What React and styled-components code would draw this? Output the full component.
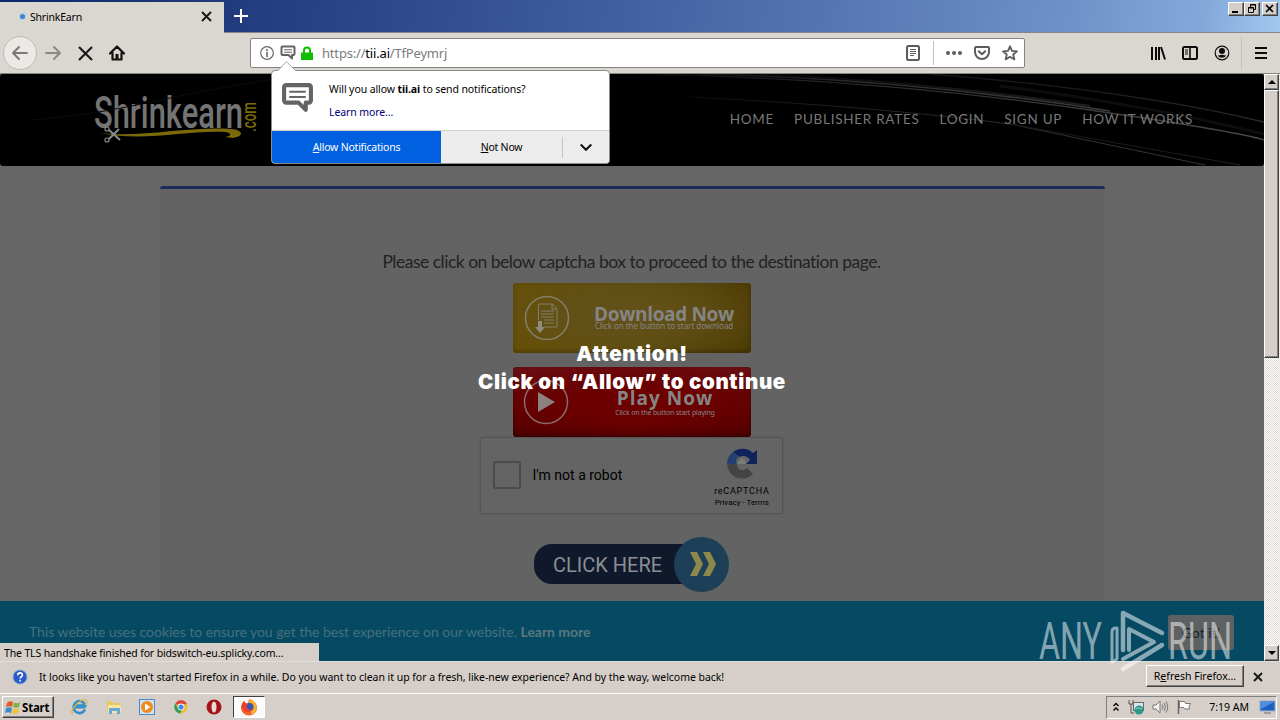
import React from 'react'
import styled, { createGlobalStyle, css } from 'styled-components'

const COLORS = {
  chrome: '#dad6d0',
  classic: '#d6cfc9',
  page: '#666',
  card: '#636363',
  cookie: '#054a62',
  blue: '#0060df'
}

const GlobalStyle = createGlobalStyle`
  * {
    box-sizing: border-box;
  }
  body {
    margin: 0;
    overflow: hidden;
  }
  button {
    border: 0;
    padding: 0;
    font: inherit;
    color: inherit;
    letter-spacing: inherit;
  }
  svg {
    display: block;
    flex: none;
    overflow: visible;
  }
`

const raised = css`
  border: 1px solid;
  border-color: #fff #404040 #404040 #fff;
  box-shadow: inset -1px -1px #808080;
  background: ${COLORS.classic};
`

const Screen = styled.div`
  position: relative;
  display: flex;
  flex-direction: column;
  width: 1280px;
  height: 720px;
  overflow: hidden;
  background: ${COLORS.classic};
  color: #000;
  font-family: 'Noto Sans', 'Liberation Sans', sans-serif;
  font-size: 10.5px;
  white-space: nowrap;
`

/* Title bar */

const TitleBar = styled.header`
  display: flex;
  height: 33px;
  border-bottom: 1px solid #84868c;
  background: linear-gradient(97deg, #0c276c 0%, #213b7d 18%, #3a5799 42%, #5474b0 64%, #6f93c8 84%, #83a9da 94%, #a2c8f0 100%);
`
const Tab = styled.div`
  display: flex;
  align-items: center;
  width: 224px;
  height: 31px;
  margin-top: 2px;
  padding: 0 12px 2px 20px;
  background: ${COLORS.chrome};
`
const LoadingDot = styled.i`
  width: 5px;
  height: 5px;
  border-radius: 50%;
  background: #3f83c8;
  box-shadow: 0 0 0 1px #b4cfe8;
`
const TabTitle = styled.span`
  flex: 1;
  margin-left: 5px;
  letter-spacing: -0.2px;
`
const NewTab = styled.button`
  display: flex;
  align-items: center;
  margin-left: 10px;
  background: none;
`
const WindowButtons = styled.div`
  display: flex;
  margin: 2px 2px 0 auto;
`
const WindowButton = styled.button`
  ${raised}
  width: 16px;
  height: 14px;
  margin-left: ${p => p.$gap || 0}px;
`

/* Navigation toolbar */

const Toolbar = styled.nav`
  display: flex;
  align-items: center;
  height: 41px;
  padding: 0 11px 0 3px;
  border-bottom: 1px solid #87857f;
  background: ${COLORS.chrome};
`
const BackButton = styled.button`
  display: grid;
  place-items: center;
  width: 34px;
  height: 34px;
  border: 1px solid #bebab5;
  border-radius: 50%;
  background: #ebe8e5;
`
const ToolIcons = styled.div`
  display: flex;
  align-items: center;
  gap: ${p => p.$gap}px;
  margin-left: ${p => p.$left || 0}px;
`
const UrlBar = styled.div`
  display: flex;
  align-items: center;
  width: 775px;
  height: 30px;
  margin-left: 125px;
  padding: 0 6px 0 8px;
  border: 1px solid #85837f;
  border-radius: 2px;
  background: #fff;
`
const Url = styled.span`
  flex: 1;
  margin-left: 8px;
  color: #7c7c7c;
  font-size: 13px;
  letter-spacing: -0.18px;

  b {
    color: #000;
    font-weight: 400;
  }
`
const Divider = styled.i`
  width: 1px;
  height: ${p => p.$height || 24}px;
  background: #c2bfbc;
`

/* Web page */

const Viewport = styled.div`
  display: flex;
  height: 587px;
`
const Page = styled.div`
  position: relative;
  display: flex;
  flex-direction: column;
  width: 1264px;
  background: ${COLORS.page};
  font-family: Lato, sans-serif;
`
const SiteHeader = styled.header`
  position: relative;
  display: flex;
  justify-content: space-between;
  align-items: center;
  flex: none;
  height: 92px;
  padding: 0 71px 0 92px;
  border-radius: 3px;
  overflow: hidden;
  background: #000;
`
const Streaks = styled.svg`
  position: absolute;
  inset: 0;
`
const SiteNav = styled.div`
  position: relative;
  display: flex;
  gap: 20px;
  margin-bottom: 2px;
  color: #787878;
  font-size: 13.5px;
  letter-spacing: 0.72px;
`
const Main = styled.main`
  flex: 1;
  min-height: 0;
  padding: 20px 159px 0 160px;
  overflow: hidden;
`
const Card = styled.section`
  display: flex;
  flex-direction: column;
  align-items: center;
  height: 600px;
  padding-right: 2px;
  border-top: 3px solid #1b2b59;
  border-radius: 3px 3px 0 0;
  background: ${COLORS.card};
`
const Hint = styled.p`
  margin: 62px 0 0;
  color: #222;
  font-size: 17.5px;
  line-height: 22px;
  letter-spacing: -0.5px;
`
const Banner = styled.button`
  display: flex;
  align-items: center;
  width: 238px;
  height: 70px;
  margin-top: ${p => p.$top}px;
  padding-left: ${p => (p.$red ? 10 : 11)}px;
  border-radius: 3px;
  background: ${p =>
    p.$red
      ? 'radial-gradient(ellipse at 50% 50%, #6c0000 30%, transparent 100%), linear-gradient(#6a1117, #5c0000 60%, #4b0000)'
      : 'radial-gradient(ellipse at 45% 45%, #625018 20%, transparent 100%), linear-gradient(90deg, #685000, #5d4d10 50%, #4a3900)'};
  box-shadow: inset 0 -2px 4px rgba(0, 0, 0, 0.25);
  color: #858585;
`
const BannerText = styled.span`
  display: flex;
  flex: 1;
  flex-direction: column;
  align-items: center;
  margin: ${p => (p.$red ? '2px 0 0 11px' : '0 0 1px 8px')};
  font-family: 'Noto Sans', sans-serif;

  b {
    font-family: 'Open Sans', 'Noto Sans', sans-serif;
    font-size: 19px;
    line-height: 18px;
    letter-spacing: ${p => (p.$red ? 1 : -0.35)}px;
  }
  small {
    font-size: ${p => (p.$red ? 7 : 8)}px;
    line-height: 8px;
    letter-spacing: ${p => (p.$red ? -0.17 : -0.03)}px;
    margin-top: ${p => (p.$red ? 2 : -1)}px;
  }
`
const Captcha = styled.div`
  display: flex;
  align-items: center;
  width: 303px;
  height: 77px;
  margin-right: 1px;
  padding: 0 12px 2px 12px;
  border: 1px solid #545454;
  border-radius: 3px;
  background: #646464;
  box-shadow: 0 0 3px rgba(0, 0, 0, 0.14);
`
const Checkbox = styled.i`
  width: 28px;
  height: 28px;
  border: 2px solid #4b4b4b;
  border-radius: 2px;
`
const CaptchaLabel = styled.span`
  flex: 1;
  margin-left: 12px;
  font: 14px Roboto, sans-serif;
`
const CaptchaBrand = styled.div`
  display: flex;
  flex-direction: column;
  align-items: center;
  padding-top: 7px;
  font: 9px/11px Roboto, sans-serif;
  letter-spacing: 0.75px;

  small {
    font-size: 8px;
    letter-spacing: 0;
  }
`
const BrandName = styled.span`
  margin-top: 6px;
`
const ClickHere = styled.button`
  display: flex;
  align-items: center;
  width: 195px;
  height: 54px;
  margin-top: 23px;
  background: none;
`
const ClickLabel = styled.span`
  width: 160px;
  height: 40px;
  margin-right: -20px;
  padding-left: 19px;
  border-radius: 18px 0 0 18px;
  background: #10182c;
  color: #8a8f94;
  font: 20px/42px Roboto, sans-serif;
  text-align: left;
`
const ClickRound = styled.span`
  display: grid;
  place-items: center;
  width: 55px;
  height: 55px;
  padding-left: 3px;
  border-radius: 50%;
  background: #1d3f58;
`
const Attention = styled.div`
  position: absolute;
  top: 266px;
  left: 0;
  width: 1264px;
  color: #fff;
  font: 900 20.5px/28px Inter, 'Liberation Sans', sans-serif;
  letter-spacing: 0.65px;
  text-align: center;
`
const CookieBar = styled.footer`
  display: flex;
  justify-content: space-between;
  align-items: center;
  flex: none;
  height: 60px;
  padding: 0 30px 0 29px;
  background: ${COLORS.cookie};
  color: #46707f;
  font-size: 14px;
  letter-spacing: -0.03px;

  b {
    color: #5b7780;
  }
`
const GotIt = styled.button`
  width: 66px;
  height: 35px;
  margin-top: 3px;
  border-radius: 3px;
  background: #5d6162;
  color: #1c2427;
`
const StatusTip = styled.div`
  position: absolute;
  bottom: 0;
  left: 0;
  width: 319px;
  height: 18px;
  padding-left: 4px;
  background: ${COLORS.classic};
  font: 10.5px/21px 'Noto Sans', sans-serif;
  letter-spacing: -0.14px;
`
const Watermark = styled.svg`
  position: absolute;
  top: 608px;
  left: 1036px;
`

/* Scrollbar */

const Scrollbar = styled.div`
  display: flex;
  flex-direction: column;
  justify-content: space-between;
  width: 16px;
  background: repeating-conic-gradient(#fff 0 25%, #dedad4 0 50%) 0 0 / 2px 2px;
`
const ScrollTop = styled.div`
  display: flex;
  flex-direction: column;
`
const ScrollButton = styled.button`
  ${raised}
  display: grid;
  place-items: center;
  width: 15px;
  height: 16px;
`
const ScrollThumb = styled.div`
  ${raised}
  width: 15px;
  height: 268px;
`

/* Permission popup */

const Popup = styled.div`
  position: absolute;
  top: 70px;
  left: 271px;
  width: 339px;
  height: 94px;
  border: 1px solid #8b8b8b;
  border-radius: 4px;
  background: #fff;
`
const PopupArrow = styled.svg`
  position: absolute;
  top: -10px;
  left: 5px;
`
const PopupBody = styled.div`
  display: flex;
  height: 59px;
  padding: 11px 0 0 9px;
`
const PopupText = styled.div`
  margin: -1px 0 0 15px;
  line-height: 16px;
  letter-spacing: -0.1px;
`
const LearnMore = styled.a`
  display: block;
  margin-top: 7px;
  color: #00007c;
  letter-spacing: -0.1px;
`
const PopupButtons = styled.div`
  display: flex;
  height: 33px;
  border-top: 1px solid #d0d0d0;
  border-radius: 0 0 3px 3px;
  overflow: hidden;
  background: #ececec;

  u {
    text-underline-offset: 1px;
  }
`
const PopupButton = styled.button`
  width: ${p => p.$width}px;
  background: ${p => (p.$primary ? COLORS.blue : 'none')};
  color: ${p => (p.$primary ? '#fff' : '#000')};
  letter-spacing: -0.22px;
`
const PopupMenu = styled.button`
  display: grid;
  place-items: center;
  align-self: center;
  flex: 1;
  height: 21px;
  border-left: 1px solid #c4c4c4;
  background: none;
`

/* Bottom bars */

const InfoBar = styled.div`
  display: flex;
  align-items: center;
  height: 32px;
  padding: 0 17px 1px 12px;
  border-top: 1px solid #e2ded9;
`
const InfoText = styled.span`
  flex: 1;
  margin-left: 11px;
  letter-spacing: -0.035px;
`
const RefreshButton = styled.button`
  ${raised}
  width: 98px;
  height: 22px;
  margin: 0 9px 2px 0;
`
const Taskbar = styled.footer`
  display: flex;
  align-items: center;
  height: 27px;
  padding: 0 3px 0 2px;
  border-top: 1px solid #fff;
`
const StartButton = styled.button`
  ${raised}
  display: flex;
  align-items: center;
  gap: 1px;
  width: 52px;
  height: 22px;
  padding-left: 2px;
  font-size: 11.5px;
  font-weight: 700;
  letter-spacing: -0.2px;
`
const QuickLaunch = styled.div`
  display: flex;
  align-items: center;
  gap: 17.5px;
  margin-left: 16px;
`
const ActiveTask = styled.div`
  display: grid;
  place-items: center;
  width: 32px;
  height: 22px;
  margin-left: 11px;
  border: 1px solid;
  border-color: #404040 #fff #fff #404040;
  background: #fbfafa;
`
const Tray = styled.div`
  display: flex;
  align-items: center;
  gap: 8px;
  width: 171px;
  height: 23px;
  margin-left: auto;
  padding: 0 1px 0 5px;
  border: 1px solid;
  border-color: #808080 #fff #fff #808080;
`
const Clock = styled.span`
  margin: 0 2px 0 auto;
`

const Icon = ({ size = 16, width, children, ...rest }) => (
  <svg width={width || size} height={size} viewBox={`0 0 ${width || size} ${size}`} fill="none" {...rest}>
    {children}
  </svg>
)

const Cross = ({ size = 10, stroke = 2 }) => (
  <Icon size={size} stroke="#1a1a1a" strokeWidth={stroke}>
    <path d={`M1 1L${size - 1} ${size - 1}M${size - 1} 1L1 ${size - 1}`} />
  </Icon>
)

const Arrow = ({ color, flip }) => (
  <Icon size={16} stroke={color} strokeWidth="2" strokeLinecap="round" strokeLinejoin="round">
    <path d={flip ? 'M1 8h14M9 2l6 6-6 6' : 'M15 8H1M7 2L1 8l6 6'} />
  </Icon>
)

const Bubble = ({ size }) => (
  <svg width={size} height={size} viewBox="0 0 32 32" fill="none">
    <path d="M5 3h22a2 2 0 0 1 2 2v13a2 2 0 0 1-2 2h-3v7l-7-7H5a2 2 0 0 1-2-2V5a2 2 0 0 1 2-2z" stroke="#646464" strokeWidth="4" strokeLinejoin="round" />
    <path d="M8 9.500h16M8 14.500h16" stroke="#646464" strokeWidth="2" />
  </svg>
)

const Logo = () => (
  <svg width="170" height="60" viewBox="0 0 170 60">
    <g fontFamily="Roboto, 'Open Sans', sans-serif" fontWeight="500">
      <text x="2" y="38" fontSize="45" fill="#747474" textLength="149" lengthAdjust="spacingAndGlyphs">Shrinkearn</text>
      <text transform="translate(164 42) rotate(-90)" fontSize="21" fill="#7b6a08" textLength="30" lengthAdjust="spacingAndGlyphs">.com</text>
    </g>
    <path d="M8 43c42 5 89-7 131-4 12 1 14 7 2 9l-8-1c7-1 7-4 0-5-37-2-82 10-125 1z" fill="#7b6a08" />
    <g stroke="#8b8b8b" strokeWidth="2" fill="none">
      <path d="M17 40l11 10M17 49l10-10" />
      <circle cx="15" cy="39" r="2" strokeWidth="1.200" />
      <circle cx="15" cy="50" r="2" strokeWidth="1.200" />
    </g>
  </svg>
)

const StreakLines = () => (
  <Streaks width="1264" height="92" fill="none">
    <defs>
      <linearGradient id="streak" gradientUnits="userSpaceOnUse" x1="600" y1="0" x2="1264" y2="0">
        <stop offset="0" stopColor="#000" />
        <stop offset=".4" stopColor="#2c2c2c" />
        <stop offset="1" stopColor="#484848" />
      </linearGradient>
      <linearGradient id="faint" gradientUnits="userSpaceOnUse" x1="650" y1="0" x2="1264" y2="0">
        <stop offset="0" stopColor="#000" />
        <stop offset="1" stopColor="#2a2a2a" />
      </linearGradient>
    </defs>
    <path d="M640 0Q870 4 1090 36T1264 72" stroke="url(#streak)" strokeWidth="1.300" />
    <path d="M700 0Q900 4 1110 37" stroke="url(#streak)" strokeWidth="1.500" />
    <path d="M760 0Q930 8 1090 32" stroke="url(#faint)" strokeWidth="2" />
    <path d="M690 23Q870 32 1010 50L1205 91" stroke="url(#streak)" strokeWidth=".8" />
    <path d="M1010 50L1240 91" stroke="url(#faint)" strokeWidth=".8" />
    <path d="M930 0Q1130 16 1264 48" stroke="url(#faint)" strokeWidth="1.300" />
    <path d="M1000 12Q1140 30 1264 60" stroke="#0d0d0d" strokeWidth="3" />
    <path d="M30 46C120 40 180 18 270 6" stroke="#0c0c0c" />
  </Streaks>
)

const DownloadIcon = () => (
  <Icon size={46} stroke="#857f68">
    <circle cx="23" cy="23" r="21.500" strokeWidth="1.500" />
    <path d="M14.500 25V9h14l4.500 5v18H20M28 9v5h5M17 16h13M17 19h13M17 22h13M20 25h10M20 28h10" />
    <path d="M14 26h4v6h3l-5 6-5-6h3z" fill="#8f8b7d" stroke="none" />
  </Icon>
)

const PlayIcon = () => (
  <Icon size={46}>
    <circle cx="23" cy="23" r="21.500" stroke="#8d6a6a" strokeWidth="1.500" />
    <path d="M15 13v20l17-10z" fill="#8c8080" />
  </Icon>
)

const RecaptchaIcon = () => (
  <svg width="32" height="32" viewBox="0 0 32 32">
    <path d="M31 2v14H20l4-4c-2-4-7-5-11-3L7 4c7-5 15-4 20 1z" fill="#10225c" />
    <path d="M1 16c0-5 2-9 6-12l5 5c-1 2-3 4-1 7z" fill="#223f72" />
    <path d="M1 16h10c0 6 6 8 10 4l6 6c-8 8-24 6-26-10z" fill="#444" />
    <path d="M11 16l4-6 4 2 1 4z" fill="#7a7a7a" />
  </svg>
)

const Ie = () => (
  <Icon size={18}>
    <path d="M15 12a6 6 0 1 1 .3-4H5" stroke="#2f8fce" strokeWidth="2.600" transform="translate(0 -.5)" />
    <path d="M5 9.500h10.500" stroke="#2f8fce" strokeWidth="2" />
    <path d="M3 16C-2 13 11 0 16 2c2 1 0 4-1 5" stroke="#e0b33a" strokeWidth="1.300" />
  </Icon>
)

const Folder = () => (
  <Icon size={16}>
    <path d="M1 2h5l1 2h8v10H1z" fill="#e8c765" />
    <path d="M2 6h13v8H2z" fill="#f6e6a0" />
    <path d="M3 15V9h11v6h-3v-3H6v3z" fill="#63a9d8" />
  </Icon>
)

const Player = () => (
  <Icon size={16}>
    <rect x=".5" y=".5" width="15" height="15" fill="#cfe2f2" stroke="#4f8bc0" />
    <circle cx="8" cy="8" r="6" fill="#f08a1d" />
    <path d="M6 4.500v7l5.500-3.500z" fill="#fff" />
  </Icon>
)

const Chrome = () => (
  <Icon size={16}>
    <circle cx="8" cy="8" r="6.500" fill="#f0bd2d" />
    <path d="M8 8L2.300 4.600A6.500 6.500 0 0 1 14 5.200H8z" fill="#dd4437" />
    <path d="M2.300 4.600A6.500 6.500 0 0 0 7 14.500l3-5L5 9z" fill="#2f9c55" />
    <circle cx="8" cy="8" r="3.400" fill="#fff" />
    <circle cx="8" cy="8" r="2.600" fill="#4284e4" />
  </Icon>
)

const Opera = () => (
  <Icon size={16}>
    <ellipse cx="8" cy="8" rx="7.500" ry="7.500" fill="#a6131b" />
    <ellipse cx="8" cy="8" rx="2.500" ry="5.500" fill="#e9dcda" />
  </Icon>
)

const Firefox = () => (
  <Icon size={18}>
    <path d="M9 1c4 1 8 4 8 9a8 7.500 0 0 1-16 0c0-3 1-5 3-7l1 2 3 .5z" fill="#f0632a" />
    <path d="M9 1c4 1 8 5 7.700 10-1 3-3 5-5 5.500L10 9z" fill="#f9b529" />
    <circle cx="9.500" cy="9" r="4" fill="#3556b8" />
    <path d="M1.500 9C2 6 3 4 4.500 3l1 2.500 3 .5-2 2c0 3 3 4 6 3-1 3-5 4-8 2z" fill="#e8402f" />
  </Icon>
)

const WinFlag = () => (
  <Icon size={16}>
    <path d="M2 4c2-2 4-2 6-1L7 8C5 7 3 7 1 8z" fill="#e4582a" />
    <path d="M9 3.500c2 1 4 1 6 0L14 8c-2 1-4 1-6 0z" fill="#7cb342" />
    <path d="M1 9c2-1 4-1 6 0l-1 5c-2-1-4-1-6 0z" fill="#3a8bd0" />
    <path d="M8 9.500c2 1 4 1 6 0L13 14c-2 1-4 1-6 0z" fill="#f3c02f" />
  </Icon>
)

const NAV_LINKS = ['HOME', 'PUBLISHER RATES', 'LOGIN', 'SIGN UP', 'HOW IT WORKS']

const BrowserToolbar = () => (
  <Toolbar>
    <BackButton><Arrow color="#7b7976" /></BackButton>
    <ToolIcons $gap={16.5} $left={8}>
      <Arrow color="#8b8985" flip />
      <Cross size={15} stroke={2.2} />
      <Icon size={16}>
        <path d="M1 8.500L8 1.500l7 7M3.500 8v6.500h9V8" stroke="#111" strokeWidth="2.200" strokeLinejoin="round" strokeLinecap="round" />
        <path d="M6.500 9h3v6h-3z" fill="#111" />
      </Icon>
    </ToolIcons>
    <UrlBar>
      <ToolIcons $gap={4.5}>
        <Icon size={16}>
          <circle cx="8" cy="8" r="6.300" stroke="#696969" strokeWidth="1.200" />
          <path d="M8 4v2M8 7v5" stroke="#696969" strokeWidth="1.600" />
        </Icon>
        <Bubble size={16} />
        <Icon size={14}>
          <path d="M1 6.500h12V14H1z" fill="#12bc00" />
          <path d="M4 7V4.500a3 3 0 0 1 6 0V7" stroke="#12bc00" strokeWidth="2" />
        </Icon>
      </ToolIcons>
      <Url>https://<b>tii.ai</b>/TfPeymrj</Url>
      <ToolIcons $gap={12}>
        <Icon size={16} stroke="#5c5c5c">
          <rect x="2" y="1" width="12" height="14" rx="1.500" strokeWidth="2" />
          <path d="M5 4.500h6M5 6.500h6M5 8.500h6M5 10.500h4" />
        </Icon>
        <Divider />
        <Icon size={16} fill="#5c5c5c">
          <circle cx="2" cy="8" r="2" />
          <circle cx="8" cy="8" r="2" />
          <circle cx="14" cy="8" r="2" />
        </Icon>
        <Icon size={16} stroke="#5c5c5c" strokeWidth="2" strokeLinecap="round" strokeLinejoin="round">
          <path d="M2 2h12a1 1 0 0 1 1 1v4a7 7 0 0 1-14 0V3a1 1 0 0 1 1-1z" />
          <path d="M4.800 6.200L8 9.300l3.200-3.100" />
        </Icon>
        <Icon size={16} stroke="#5c5c5c" strokeWidth="1.800" strokeLinejoin="round">
          <path d="M8 1.300l2 4.600 5 .4-3.800 3.200 1.200 4.900L8 11.800l-4.400 2.600 1.200-4.900L1 6.300l5-.4z" />
        </Icon>
      </ToolIcons>
    </UrlBar>
    <ToolIcons $gap={16} $left={125}>
      <Icon size={16} stroke="#0c0c0c" strokeWidth="2">
        <path d="M2 2v13M6 2v13M9 2v13M11 2l4 12.500" />
      </Icon>
      <Icon size={16} stroke="#0c0c0c">
        <rect x="1" y="2" width="14" height="12" rx="1.500" strokeWidth="2" />
        <path d="M8 2v12" strokeWidth="1.600" />
        <path d="M3 5h3M3 7h3M3 9h3" />
      </Icon>
      <Icon size={16}>
        <circle cx="8" cy="8" r="6.800" stroke="#0c0c0c" strokeWidth="1.200" />
        <circle cx="8" cy="6" r="3" fill="#0c0c0c" />
        <path d="M3.500 10.500c2 0 2-.8 4.500-.8s2.500.8 4.500.8A5.500 5.500 0 0 1 3.500 10.500z" fill="#0c0c0c" />
      </Icon>
    </ToolIcons>
    <ToolIcons $gap={12} $left={11}>
      <Divider $height={32} />
      <Icon size={14} stroke="#0c0c0c" strokeWidth="2">
        <path d="M1 2h12M1 7h12M1 12h12" />
      </Icon>
    </ToolIcons>
  </Toolbar>
)

const WebPage = () => (
  <Page>
    <SiteHeader>
      <StreakLines />
      <Logo />
      <SiteNav>
        {NAV_LINKS.map(link => <span key={link}>{link}</span>)}
      </SiteNav>
    </SiteHeader>
    <Main>
      <Card>
        <Hint>Please click on below captcha box to proceed to the destination page.</Hint>
        <Banner $top={10}>
          <DownloadIcon />
          <BannerText>
            <b>Download Now</b>
            <small>Click on the button to start download</small>
          </BannerText>
        </Banner>
        <Banner $top={14} $red>
          <PlayIcon />
          <BannerText $red>
            <b>Play Now</b>
            <small>Click on the button start playing</small>
          </BannerText>
        </Banner>
        <Captcha>
          <Checkbox />
          <CaptchaLabel>I'm not a robot</CaptchaLabel>
          <CaptchaBrand>
            <RecaptchaIcon />
            <BrandName>reCAPTCHA</BrandName>
            <small>Privacy - Terms</small>
          </CaptchaBrand>
        </Captcha>
        <ClickHere>
          <ClickLabel>CLICK HERE</ClickLabel>
          <ClickRound>
            <Icon size={26} fill="#8b8a4c">
              <path d="M0 1h7l6 12-6 12H0l6-12zM13 1h7l6 12-6 12h-7l6-12z" />
            </Icon>
          </ClickRound>
        </ClickHere>
      </Card>
    </Main>
    <CookieBar>
      <span>This website uses cookies to ensure you get the best experience on our website. <b>Learn more</b></span>
      <GotIt>Got it!</GotIt>
    </CookieBar>
    <Attention>
      Attention!
      <br />
      Click on “Allow” to continue
    </Attention>
    <StatusTip>The TLS handshake finished for bidswitch-eu.splicky.com...</StatusTip>
  </Page>
)

const PermissionPopup = () => (
  <Popup>
    <PopupArrow width="20" height="11">
      <path d="M0 11L10 1l10 10z" fill="#fff" />
      <path d="M0 10L9.500 .7 19 10" fill="none" stroke="#a5a5a5" />
    </PopupArrow>
    <PopupBody>
      <Bubble size={33} />
      <PopupText>
        Will you allow <b>tii.ai</b> to send notifications?
        <LearnMore>Learn more...</LearnMore>
      </PopupText>
    </PopupBody>
    <PopupButtons>
      <PopupButton $width={169} $primary><u>A</u>llow Notifications</PopupButton>
      <PopupButton $width={121}><u>N</u>ot Now</PopupButton>
      <PopupMenu>
        <Icon size={12} stroke="#111" strokeWidth="2">
          <path d="M.7 3.500L6 8.800l5.300-5.300" />
        </Icon>
      </PopupMenu>
    </PopupButtons>
  </Popup>
)

const App = () => (
  <Screen>
    <GlobalStyle />
    <TitleBar>
      <Tab>
        <LoadingDot />
        <TabTitle>ShrinkEarn</TabTitle>
        <Cross size={11} />
      </Tab>
      <NewTab>
        <Icon size={14} stroke="#fff" strokeWidth="2"><path d="M7 0v14M0 7h14" /></Icon>
      </NewTab>
      <WindowButtons>
        <WindowButton>
          <Icon size={12} width={14}><path d="M3 8h6v2H3z" fill="#000" /></Icon>
        </WindowButton>
        <WindowButton>
          <Icon size={12} width={14} stroke="#000">
            <path d="M5.500 4V1.500h5v5H8M5 2h6" />
            <path d="M3.500 4.500h5v5h-5zM3 5h6" />
          </Icon>
        </WindowButton>
        <WindowButton $gap={2}>
          <Icon size={12} width={14} stroke="#000" strokeWidth="1.600"><path d="M3 2l7 7M10 2L3 9" /></Icon>
        </WindowButton>
      </WindowButtons>
    </TitleBar>
    <BrowserToolbar />
    <Viewport>
      <WebPage />
      <Scrollbar>
        <ScrollTop>
          <ScrollButton><Icon size={8} fill="#000"><path d="M4 2l4 4H0z" /></Icon></ScrollButton>
          <ScrollThumb />
        </ScrollTop>
        <ScrollButton><Icon size={8} fill="#000"><path d="M0 2h8L4 6z" /></Icon></ScrollButton>
      </Scrollbar>
    </Viewport>
    <InfoBar>
      <Icon size={16}>
        <circle cx="8" cy="8" r="7" fill="#2a5bc8" stroke="#8ba5d8" />
        <path d="M5.700 6.300c0-3.300 4.800-3.100 4.700-.2 0 1.700-2.200 1.600-2.200 3.400M8.200 10.800v1.700" stroke="#fff" strokeWidth="1.600" />
      </Icon>
      <InfoText>
        It looks like you haven't started Firefox in a while. Do you want to clean it up for a fresh, like-new experience? And by the way, welcome back!
      </InfoText>
      <RefreshButton>R<u>e</u>fresh Firefox...</RefreshButton>
      <Cross size={10} />
    </InfoBar>
    <Taskbar>
      <StartButton><WinFlag />Start</StartButton>
      <QuickLaunch>
        <Ie />
        <Folder />
        <Player />
        <Chrome />
        <Opera />
      </QuickLaunch>
      <ActiveTask><Firefox /></ActiveTask>
      <Tray>
        <Icon size={10} width={8} stroke="#000" strokeWidth="1.300"><path d="M1.500 4L4 1.500 6.500 4M1.500 8.500L4 6l2.500 2.500" /></Icon>
        <Icon size={16}>
          <path d="M1 1v4h4V1M3 5v9h3" stroke="#555" />
          <rect x="5.500" y="3.500" width="10" height="8" fill="#d8e6ee" stroke="#666" />
          <circle cx="11" cy="11" r="4.500" fill="#2d9a8c" />
          <path d="M8 10c2-3 4 1 6-1" stroke="#a8e0b5" />
        </Icon>
        <Icon size={16} stroke="#777">
          <path d="M1 6h3l4-4v12l-4-4H1z" fill="#f4f4f4" />
          <path d="M10 5.500q2 2.500 0 5M12 4q3 4 0 8M14 2.500q3.500 5.500 0 11" />
        </Icon>
        <Icon size={16}>
          <path d="M2.500 1v14" stroke="#666" strokeWidth="1.500" />
          <path d="M3.500 2.500h5l1 2h5l-1.500 3 .5 2.500H8.500l-1-1.500h-4z" fill="#fff" stroke="#777" />
        </Icon>
        <Clock>7:19 AM</Clock>
        <Icon size={16}>
          <rect x="1" y="2" width="15" height="10" fill="#1f5fc0" stroke="#9cb3cc" />
          <path d="M2 3h13L2 10z" fill="#4d8fe0" />
          <path d="M5 14h7" stroke="#667" />
        </Icon>
      </Tray>
    </Taskbar>
    <PermissionPopup />
    <Watermark width="200" height="66" fill="none">
      <g fill="#fff" fillOpacity=".52" fontFamily="Roboto, sans-serif" fontWeight="400">
        <text x="3" y="51" fontSize="52" textLength="63" lengthAdjust="spacingAndGlyphs">ANY</text>
        <text x="132" y="51" fontSize="52" textLength="64" lengthAdjust="spacingAndGlyphs">RUN</text>
      </g>
      <g stroke="#fff" strokeOpacity=".52" strokeLinecap="round" strokeLinejoin="round">
        <path d="M80 20q-4 0-4 4v30l5-3V20" strokeWidth="3" />
        <path d="M93 42V21l25 13-31 17" strokeWidth="4" />
        <path d="M87 42V5l39 20M126 37L87 61" strokeWidth="4.500" />
      </g>
    </Watermark>
  </Screen>
)

export default App
